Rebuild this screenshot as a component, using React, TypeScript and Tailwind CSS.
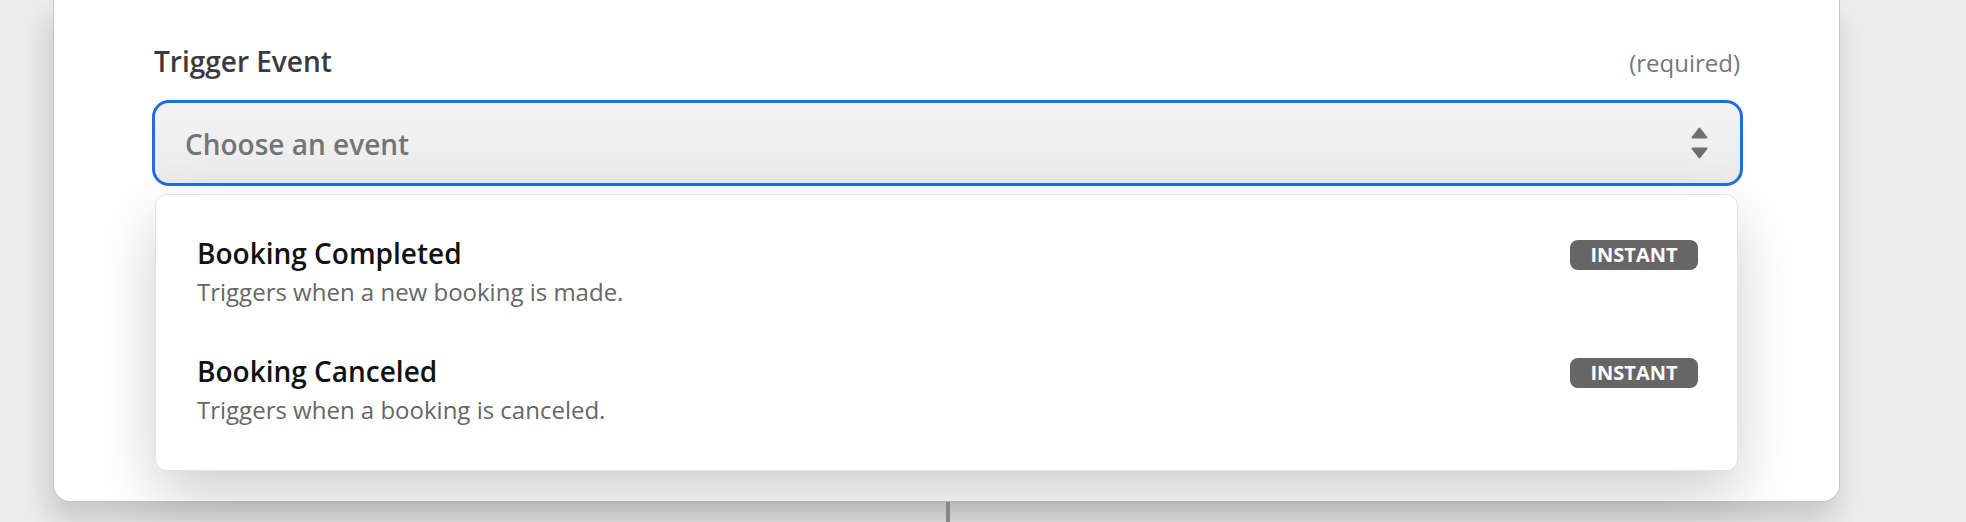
import React from 'react';

const events = [
  { title: 'Booking Completed', description: 'Triggers when a new booking is made.', badge: 'INSTANT' },
  { title: 'Booking Canceled', description: 'Triggers when a booking is canceled.', badge: 'INSTANT' },
];

const SortArrows: React.FC = () => (
  <svg width="17" height="32" viewBox="0 0 17 32" className="shrink-0">
    <path d="M8.5 1.5 L15.5 10.5 H1.5 Z" fill="#6e6e6e" stroke="#6e6e6e" strokeWidth="2" strokeLinejoin="round" />
    <path d="M1.5 21.5 H15.5 L8.5 30.5 Z" fill="#6e6e6e" stroke="#6e6e6e" strokeWidth="2" strokeLinejoin="round" />
  </svg>
);

export default function App() {
  return (
    <div className="min-h-screen w-[1966px] bg-[#ededed] pl-[53px] font-['Open_Sans',sans-serif] overflow-hidden">
      <div className="w-[1787px]">
        {/* Step card */}
        <div className="h-[502px] bg-white border-x border-b border-[#c6c6c6] rounded-b-[17px] shadow-[-4px_18px_30px_rgba(0,0,0,0.17)] pl-[98px] pr-[96px] pt-[42px]">
          <div className="flex items-baseline justify-between">
            <label className="pl-[2px] text-[28px] leading-[38px] font-semibold text-[#3a3a3a]">Trigger Event</label>
            <span className="pr-[3px] text-[24px] text-[#777777]">(required)</span>
          </div>

          <div className="relative mt-[19px]">
            <button className="w-full h-[86px] flex items-center justify-between border-[3px] border-[#1f6ddf] rounded-[17px] bg-gradient-to-b from-[#f3f3f3] to-[#ebebeb] pl-[30px] pr-[32px] text-left">
              <span className="pt-[2px] text-[28px] font-semibold text-[#747474]">Choose an event</span>
              <SortArrows />
            </button>

            {/* Dropdown */}
            <div className="absolute top-[94px] left-[3px] right-[5px] z-10 bg-white border border-[#e3e3e3] rounded-[12px] shadow-[0_25px_60px_rgba(0,0,0,0.19)] pt-[15px] pb-[24px]">
              {events.map((ev, i) => (
                <div key={i} className="flex items-start justify-between pl-[41px] pr-[39px] pt-[25px] pb-[20px]">
                  <div>
                    <div className="text-[28px] leading-[36px] font-semibold text-[#111111]">{ev.title}</div>
                    <div className="mt-[5px] text-[24px] leading-[32px] text-[#666666]">{ev.description}</div>
                  </div>
                  <span className="mt-[5px] w-[128px] h-[30px] rounded-[8px] bg-[#666666] text-white text-[20px] leading-[30px] font-bold text-center">
                    {ev.badge}
                  </span>
                </div>
              ))}
            </div>
          </div>
        </div>

        {/* Connector */}
        <div className="flex justify-center">
          <div className="ml-[3px] w-[4px] h-[24px] bg-[#8f8f8f]" />
        </div>
      </div>
    </div>
  );
}
